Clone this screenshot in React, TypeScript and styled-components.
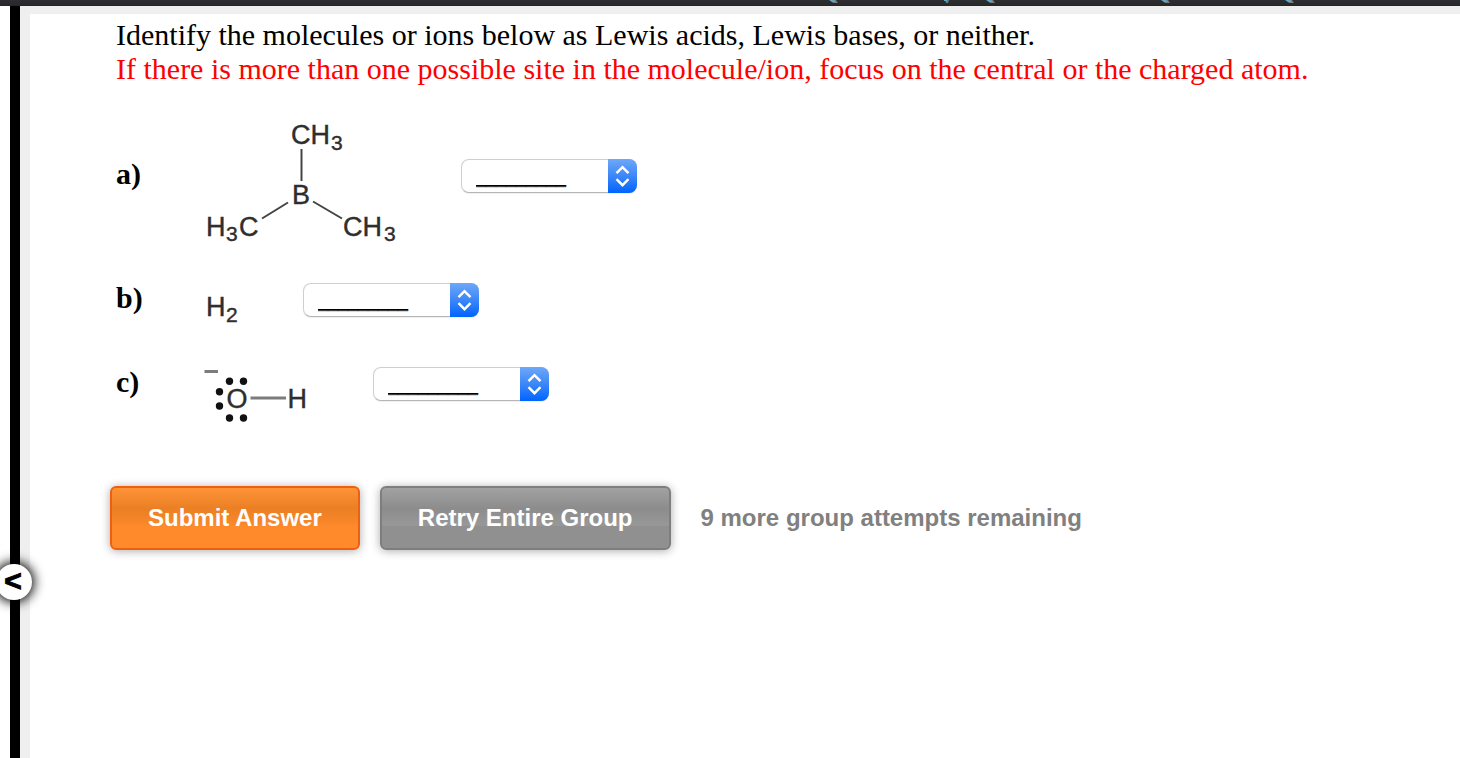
import React from "react";
import styled, { createGlobalStyle } from "styled-components";

const GlobalStyle = createGlobalStyle`
  * { box-sizing: border-box; }
  html, body { margin: 0; background: #fff; }
  body { font-family: "Liberation Serif", "Times New Roman", serif; color: #000; }
`;

const sans = `"Liberation Sans", Arial, Helvetica, sans-serif`;

const Page = styled.div`
  display: flex;
  flex-direction: column;
  min-height: 100vh;
`;

const TopBar = styled.header`
  height: 6px;
  background: linear-gradient(#2c2e30, #29292b 80%, #252224);
  display: flex;
  justify-content: flex-end;
`;

const TopMarks = styled.svg`
  display: block;
  width: 660px;
  height: 6px;
`;

const Body = styled.div`
  position: relative;
  flex: 1;
  display: flex;
  padding-left: 10px;
  overflow: hidden;
`;

const Divider = styled.div`
  flex: none;
  width: 10px;
  background: #000;
`;

const Toggle = styled.button`
  position: absolute;
  left: -4px;
  top: 558px;
  width: 36px;
  height: 36px;
  padding: 0 2px 2px 0;
  border: 0;
  border-radius: 50%;
  background: #fff;
  color: #000;
  box-shadow: 0 0 12px 2px #000;
  font: bold 30px/34px ${sans};
  text-align: center;
  cursor: pointer;
  -webkit-text-stroke: 1px #000;
`;

const Content = styled.main`
  flex: 1;
  min-width: 0;
  border: solid #efefef;
  border-width: 8px 0 0 10px;
  padding: 4px 0 40px 86px;
`;

const Prompt = styled.p<{ $warn?: boolean }>`
  margin: 0;
  font-size: 30px;
  line-height: 34px;
  color: ${(p) => (p.$warn ? "#f00" : "#000")};
`;

const Questions = styled.div`
  padding-top: 22px;
`;

const Question = styled.div<{ $gap?: number }>`
  display: flex;
  align-items: center;
  margin-bottom: ${(p) => p.$gap ?? 0}px;
`;

const Label = styled.label`
  width: 90px;
  padding-bottom: 4px;
  font-size: 30px;
  line-height: 34px;
  font-weight: bold;
`;

const Figure = styled.svg`
  display: block;
  flex: none;
  margin-right: 65px;
  overflow: visible;
  font-family: ${sans};
  font-size: 27px;
  fill: #2e2e2e;

  text { stroke: #2e2e2e; stroke-width: 0.4; }
  .sub { font-size: 21px; }
  line { stroke: #444; stroke-width: 2; }
  line.soft { stroke: #7c7c7c; stroke-width: 3; }
  circle { fill: #111; }
`;

const SelectBox = styled.div`
  position: relative;
  width: 176px;
  height: 34px;
`;

const Select = styled.select`
  appearance: none;
  display: block;
  width: 100%;
  height: 100%;
  margin: 0;
  padding: 0 30px 0 14px;
  border: 1px solid #cfcfcf;
  border-bottom-color: #b5b5b5;
  border-radius: 8px;
  background: #fff;
  box-shadow: 0 1px 1px #0001;
  color: #000;
  font: 18px/24px ${sans};
  text-shadow: 0 1px 0 #000a;
`;

const Stepper = styled.svg`
  position: absolute;
  top: 0;
  right: 0;
  width: 29px;
  height: 34px;
  border-radius: 0 8px 8px 0;
  background: linear-gradient(#6ea8f9, #3c87f8 50%, #0064ff);
  pointer-events: none;
`;

const Actions = styled.div`
  display: flex;
  align-items: center;
  gap: 20px;
  margin: 56px 0 0 -6px;
  font: bold 24px/28px ${sans};
`;

const ActionButton = styled.button<{ $primary?: boolean }>`
  height: 64px;
  padding: 0 36px;
  border: 2px solid ${(p) => (p.$primary ? "#ee5f10" : "#7e7e7e")};
  border-radius: 6px;
  background: ${(p) =>
    p.$primary
      ? "linear-gradient(#ff9336, #ea7f24 34%, #fb8829 62%, #ff8a2b 64%)"
      : "linear-gradient(#a2a2a2, #8c8c8c 34%, #989898 62%, #909090 64%)"};
  box-shadow: 0 1px 10px #0005;
  color: #fff;
  font: inherit;
  white-space: nowrap;
  cursor: pointer;
`;

const Attempts = styled.span`
  padding-left: 10px;
  color: #808080;
`;

function AnswerSelect({ id }: { id: string }) {
  return (
    <SelectBox>
      <Select id={id} defaultValue="">
        <option value="">_________</option>
        <option value="acid">Lewis acid</option>
        <option value="base">Lewis base</option>
        <option value="neither">neither</option>
      </Select>
      <Stepper viewBox="0 0 29 34" fill="none" stroke="#fff" strokeWidth="2.4" aria-hidden="true">
        <path d="M8.5 14.2 14.5 8.2l6 6M8.5 20.2l6 6 6-6" />
      </Stepper>
    </SelectBox>
  );
}

function Trimethylborane() {
  return (
    <Figure width="190" height="136" role="img" aria-label="Trimethylborane">
      <text x="85" y="36">CH</text>
      <text className="sub" x="125" y="42">3</text>
      <line x1="95.5" y1="41" x2="95.5" y2="73" />
      <text x="86" y="96">B</text>
      <line x1="56" y1="110.5" x2="82" y2="94.5" />
      <line x1="107" y1="93.5" x2="136" y2="110.5" />
      <text x="0" y="128">H</text>
      <text className="sub" x="20" y="133">3</text>
      <text x="33" y="128">C</text>
      <text x="137" y="128">CH</text>
      <text className="sub" x="178" y="133">3</text>
    </Figure>
  );
}

function Hydrogen() {
  return (
    <Figure width="32" height="50" role="img" aria-label="Hydrogen">
      <text x="0" y="41">H</text>
      <text className="sub" x="20" y="47">2</text>
    </Figure>
  );
}

const electrons = [
  [23.5, 43.3], [37.5, 43.3], [13.5, 53.7], [13.5, 68], [23.5, 80], [37.5, 80],
];

function Hydroxide() {
  return (
    <Figure width="102" height="92" role="img" aria-label="Hydroxide ion">
      <line className="soft" x1="-1.5" y1="33.5" x2="12" y2="33.5" />
      {electrons.map(([x, y]) => (
        <circle key={`${x}-${y}`} cx={x} cy={y} r="3.7" />
      ))}
      <text x="20.5" y="70">O</text>
      <line className="soft" x1="44.5" y1="60" x2="80" y2="60" />
      <text x="81.5" y="70">H</text>
    </Figure>
  );
}

export default function App() {
  return (
    <Page>
      <GlobalStyle />
      <TopBar>
        <TopMarks viewBox="0 0 660 6" aria-hidden="true">
          {[33, 190, 365, 489].map((x) => (
            <g key={x}>
              <path d={`M${x - 3} 0h6l2 3h-5z`} fill="#777" />
              <path d={`M${x - 4} 0h5l2 2h-4z`} fill="#5ba9c9" />
            </g>
          ))}
          <path d="M145 0h4l-1 3h-2z" fill="#777" />
          <path d="M144 0h3v1h-3z" fill="#5ba9c9" />
        </TopMarks>
      </TopBar>
      <Body>
        <Divider />
        <Content>
          <Prompt>Identify the molecules or ions below as Lewis acids, Lewis bases, or neither.</Prompt>
          <Prompt $warn>
            If there is more than one possible site in the molecule/ion, focus on the central or the charged atom.
          </Prompt>
          <Questions>
            <Question $gap={31}>
              <Label htmlFor="answer-a">a)</Label>
              <Trimethylborane />
              <AnswerSelect id="answer-a" />
            </Question>
            <Question $gap={13}>
              <Label htmlFor="answer-b">b)</Label>
              <Hydrogen />
              <AnswerSelect id="answer-b" />
            </Question>
            <Question>
              <Label htmlFor="answer-c">c)</Label>
              <Hydroxide />
              <AnswerSelect id="answer-c" />
            </Question>
          </Questions>
          <Actions>
            <ActionButton type="button" $primary>Submit Answer</ActionButton>
            <ActionButton type="button">Retry Entire Group</ActionButton>
            <Attempts>9 more group attempts remaining</Attempts>
          </Actions>
        </Content>
        <Toggle type="button" aria-label="Collapse panel">&lt;</Toggle>
      </Body>
    </Page>
  );
}
